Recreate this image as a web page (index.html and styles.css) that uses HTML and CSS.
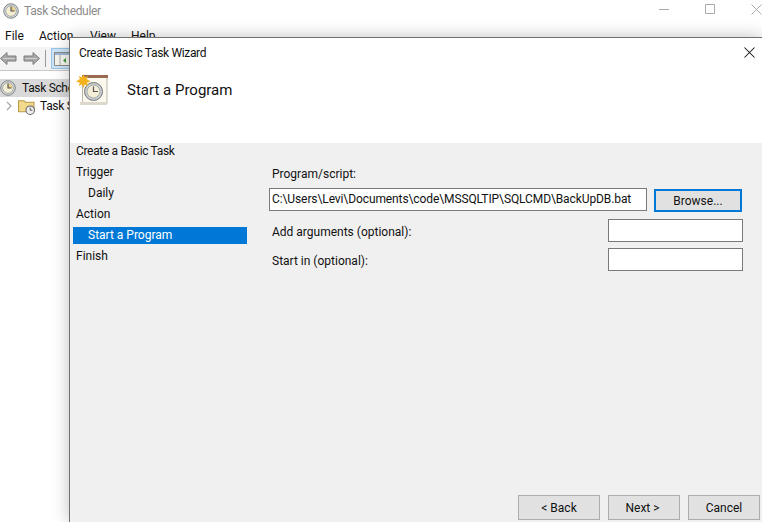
FILE: index.html
```html
<!DOCTYPE html>
<html lang="en">
<head>
<meta charset="utf-8">
<title>Create Basic Task Wizard</title>
<link rel="stylesheet" href="styles.css">
</head>
<body>
<div class="main">
  <div class="titlebar">
    <svg class="clock-small" viewBox="0 0 16 16"><circle cx="8" cy="8" r="7.300" fill="#cfd6da" stroke="#7d7d7d" stroke-width=".9"/><circle cx="8" cy="8" r="5.300" fill="#f6eed2" stroke="#8f969a" stroke-width=".7"/><path d="M8 8V3.500A4.500 4.500 0 0 1 12.500 8z" fill="#e9cf8e"/><path d="M8 3.500V8h3.500" fill="none" stroke="#4a4a4a" stroke-width="1.100"/></svg>
    <span class="apptitle tight">Task Scheduler</span>
    <span class="caps">
      <svg viewBox="0 0 11 11" class="cap"><path d="M0 5.500h10" stroke="#aaa" fill="none"/></svg>
      <svg viewBox="0 0 11 11" class="cap"><path d="M.5.500h9v9h-9z" stroke="#aaa" fill="none"/></svg>
      <svg viewBox="0 0 11 11" class="cap"><path d="M.5.500l10 10M10.500.500l-10 10" stroke="#aaa" fill="none"/></svg>
    </span>
  </div>
  <div class="menu"><span class="m-file">File</span><span class="m-action">Action</span><span class="m-view">View</span><span class="m-help">Help</span></div>
  <div class="toolbar">
    <svg class="arrow" viewBox="0 0 17 15"><path d="M.5 7.500L7 1.500v3.500h9v5H7v3.500z" fill="#a8a8a8" stroke="#7f7f7f"/><path d="M3 7.500h12" stroke="#cfcfcf"/></svg>
    <svg class="arrow last" viewBox="0 0 17 15"><path d="M16.500 7.500L10 1.500v3.500H1v5h9v3.500z" fill="#a8a8a8" stroke="#7f7f7f"/><path d="M14 7.500H2" stroke="#cfcfcf"/></svg>
    <i class="tsep"></i>
    <span class="tbtn"><svg viewBox="0 0 16 14"><path d="M.5.500h15v13H.500z" fill="#f6f6f0" stroke="#8a8a8a"/><path d="M1 1h14v2H1z" fill="#9cb7d6"/><path d="M6 3v10" stroke="#aaa"/><path d="M12 6l-3 2.500 3 2.500z" fill="#3c9a3c"/></svg></span>
  </div>
  <div class="tree">
    <div class="row sel">
      <svg class="clock-tree" viewBox="0 0 16 16"><circle cx="8" cy="8" r="7.300" fill="#cfd6da" stroke="#7d7d7d" stroke-width=".9"/><circle cx="8" cy="8" r="5.300" fill="#f6eed2" stroke="#8f969a" stroke-width=".7"/><path d="M8 8V3.500A4.500 4.500 0 0 1 12.500 8z" fill="#e9cf8e"/><path d="M8 3.500V8h3.500" fill="none" stroke="#4a4a4a" stroke-width="1.100"/></svg>
      <span class="tight">Task Sche</span>
    </div>
    <div class="row child">
      <svg class="chev" viewBox="0 0 8 10"><path d="M2 1l4 4-4 4" fill="none" stroke="#a6a6a6" stroke-width="1.200"/></svg>
      <svg class="folder" viewBox="0 0 16 16"><path d="M.5 2.500h5l1.500 1.500h8v9H.5z" fill="#f3d98b" stroke="#b99a48"/><circle cx="11.500" cy="11.500" r="4" fill="#eee" stroke="#666"/><path d="M11.500 9v2.500h2" fill="none" stroke="#444" stroke-width=".8"/></svg>
      <span class="tight">Task S</span>
    </div>
  </div>
</div>

<section class="dialog">
  <header class="dlg-title">
    <span class="tight">Create Basic Task Wizard</span>
    <svg class="dlg-close" viewBox="0 0 11 11"><path d="M.5.500l10 10M10.500.500l-10 10" stroke="#111" stroke-width="1.050" fill="none"/></svg>
  </header>
  <div class="dlg-head">
    <svg class="wizard-icon" viewBox="0 0 32 32">
      <path d="M6.500 3.500h24.500v26H6.500z" fill="#fbf8ee" stroke="#bdb7a6"/>
      <path d="M6 1h26v3H6z" fill="#9a6a50"/>
      <path d="M4 28h27v3H4z" fill="#dcd8cc"/>
      <circle cx="17.500" cy="17.500" r="9" fill="#c9cfd2" stroke="#777"/>
      <circle cx="17.500" cy="17.500" r="6.500" fill="#f5eed6" stroke="#8f969a" stroke-width=".7"/>
      <path d="M17.500 12.500V17.500h4.500" fill="none" stroke="#555" stroke-width="1.200"/>
      <path d="M7.500 0l1.300 3.200L12 2l-1.200 3 3.700 2.500-3.700 1.200 1.200 3.300-3.400-1.400L7.500 14 6 10.600 2.700 12l1.200-3.300L0 7.500 3.900 5 2.700 2l3.300 1.200z" fill="#f5b21f"/>
    </svg>
    <h1>Start a Program</h1>
  </div>
  <div class="dlg-body">
    <nav class="steps">
      <div class="step tight">Create a Basic Task</div>
      <div class="step">Trigger</div>
      <div class="step sub">Daily</div>
      <div class="step">Action</div>
      <div class="step sub active">Start a Program</div>
      <div class="step">Finish</div>
    </nav>
    <div class="form">
      <div class="lbl-top">Program/script:</div>
      <div class="prog-row">
        <div class="field wide">C:\Users\Levi\Documents\code\MSSQLTIP\SQLCMD\BackUpDB.bat</div>
        <button class="btn browse">Browse...</button>
      </div>
      <div class="opt-row"><span class="opt-label">Add arguments (optional):</span><div class="field short"></div></div>
      <div class="opt-row second"><span class="opt-label">Start in (optional):</span><div class="field short"></div></div>
    </div>
  </div>
  <footer class="dlg-foot">
    <button class="btn back">&lt; Back</button>
    <button class="btn next">Next &gt;</button>
    <button class="btn cancel">Cancel</button>
  </footer>
</section>
</body>
</html>
```

FILE: styles.css
```css
* { box-sizing: border-box; }
html, body { margin: 0; height: 100%; }
body {
  width: 762px; height: 522px; overflow: hidden; position: relative;
  background: #fff; color: #111;
  font: 12px/16px Roboto, "Noto Sans", sans-serif;
}
.tight { letter-spacing: -.33px; }
.main { height: 522px; display: flex; flex-direction: column; }
.titlebar { height: 22px; display: flex; align-items: center; padding-left: 3px; flex: none; }
.clock-small { width: 16px; height: 16px; }
.apptitle { margin-left: 5px; color: #8c8c8c; }
.caps { margin-left: auto; display: flex; gap: 35px; margin-top: -4px; }
.cap { width: 11px; height: 11px; }
.menu {
  height: 25px; flex: none; display: flex; padding: 6px 0 0 5px; background: #fff;
}
.m-file { width: 34px; }
.m-action { width: 51px; }
.m-view { width: 41px; }
.toolbar {
  height: 24px; flex: none; display: flex; align-items: center;
  border-bottom: 1px solid #c8c8c8; background: #f3f3f3;
}
.arrow { width: 17px; height: 15px; margin-right: 6px; }
.arrow.last { margin-right: 5px; }
.tsep { width: 1px; height: 17px; background: #9a9a9a; margin: 0 5px 0 0; }
.tbtn { width: 22px; height: 21px; background: #cce4f7; border: 1px solid #99c4e8; display: flex; align-items: center; justify-content: center; }
.tbtn svg { width: 16px; height: 14px; }
.tree { padding-top: 8px; flex: 1; }
.row { height: 18px; display: flex; align-items: center; white-space: nowrap; }
.row.sel { background: #d9d9d9; }
.clock-tree { width: 16px; height: 16px; margin-right: 6px; flex: none; }
.row.child { padding-left: 5px; }
.chev { width: 8px; height: 10px; margin-right: 5px; flex: none; }
.folder { width: 17px; height: 17px; margin-right: 5px; flex: none; }

.dialog {
  position: absolute; left: 69px; top: 37px; width: 693px; height: 485px;
  background: #fff; border-top: 1px solid #707070; border-left: 1px solid #707070;
  box-shadow: 0 0 16px rgba(0, 0, 0, .25);
  display: flex; flex-direction: column;
}
.dlg-title { height: 29px; flex: none; display: flex; align-items: center; justify-content: space-between; padding: 0 7px 0 9px; color: #111; }
.dlg-close { width: 11px; height: 11px; }
.dlg-head { height: 76px; flex: none; display: flex; align-items: flex-start; padding: 7px 0 0 6px; }
.wizard-icon { width: 32px; height: 32px; }
h1 { margin: 6px 0 0 19px; font-size: 15px; line-height: 20px; font-weight: 400; color: #111; }
.dlg-body { flex: 1; display: flex; background: #f0f0f0; min-height: 0; }
.steps { width: 174px; margin-left: 3px; flex: none; }
.step { height: 21px; line-height: 17px; padding-left: 3px; }
.step.sub { padding-left: 15px; }
.step.sub.active { height: 17px; background: #0078d7; color: #fff; margin: 0 0 4px; line-height: 16px; }
.form { padding: 23px 0 0 22px; flex: 1; }
.lbl-top { padding-left: 3px; height: 16px; margin-bottom: 6px; }
.prog-row { display: flex; align-items: flex-start; }
.field { background: #fff; border: 1px solid #7a7a7a; height: 23px; line-height: 20px; padding-left: 2px; white-space: nowrap; }
.wide { width: 378px; letter-spacing: -.1px; }
.btn { font: inherit; color: #111; background: #e1e1e1; border: 1px solid #adadad; padding: 0; height: 25px; }
.browse { width: 88px; height: 23px; margin: 1px 0 0 7px; padding-top: 1px; border: 2px solid #0078d7; }
.opt-row { display: flex; justify-content: space-between; align-items: center; padding-left: 3px; width: 474px; height: 23px; margin-top: 7px; }
.opt-row.second { margin-top: 6px; }
.opt-label { padding-top: 3px; }
.short { width: 135px; }
.dlg-foot { height: 35px; flex: none; background: #f0f0f0; display: flex; padding: 8px 0 0 448px; }
.back { width: 82px; }
.next { width: 72px; margin-left: 8px; padding-right: 3px; }
.cancel { width: 72px; margin-left: 8px; }
```
